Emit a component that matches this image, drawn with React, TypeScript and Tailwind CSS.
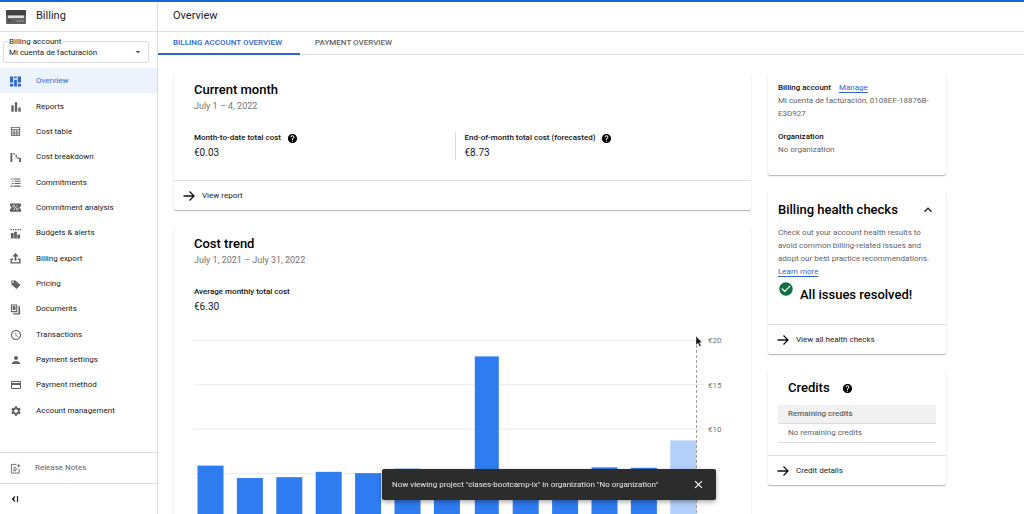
import { useState, type ReactNode } from "react";
import { MdBarChart, MdPerson, MdSettings, MdAccessTime, MdOutlineCreditCard, MdHelp, MdCheckCircle, MdClose, MdArrowDropDown, MdExpandLess } from "react-icons/md";

const font = "font-['Roboto','Liberation_Sans',sans-serif]";

function Glyph({ children }: { children: ReactNode }) {
  return (
    <svg viewBox="0 0 24 24" className="size-[11px] shrink-0" fill="currentColor">{children}</svg>
  );
}

const OverviewIcon = () => (
  <Glyph>
    <path d="M0 1h7v13H0zM0 17h7v6H0zM9 1h6v4H9zM9 8h6v15H9zM17 1h7v13h-7zM17 17h7v6h-7z" />
  </Glyph>
);

const CostTableIcon = () => (
  <Glyph>
    <path fillRule="evenodd" d="M2 2h20v20H2zM4 4v3h16V4zM4 9.500v3h4v-3zM10 9.500v3h4v-3zM16 9.500v3h4v-3zM4 14v2.500h4V14zM10 14v2.500h4V14zM16 14v2.500h4V14zM4 18v2h4v-2zM10 18v2h4v-2zM16 18v2h4v-2z" />
  </Glyph>
);

const BreakdownIcon = () => (
  <Glyph>
    <path d="M1 2h4v20H1zM7 2h3v4H7zM12 6h3v6h-3zM16 11h3v4h-3zM20 13h4v9h-4z" />
  </Glyph>
);

const CommitmentsIcon = () => (
  <Glyph>
    <path d="M8 3h15v2.500H8zM10 8h13v2.500H10zM10 13h13v2.500H10zM8 18.500h15V21H8zM1 3h5v2H1zM4 8h4v2H4zM4 13h4v2H4zM1 18.500h5V21H1z" />
  </Glyph>
);

const AnalysisIcon = () => (
  <Glyph>
    <path d="M0 3h24v6a3 3 0 0 0 0 6v6H0v-6a3 3 0 0 0 0-6z" />
    <path d="M16 6.500L8 17.500" stroke="#fff" strokeWidth="1.500" />
    <circle cx="8" cy="9" r="2" fill="none" stroke="#fff" strokeWidth="1.500" />
    <circle cx="16" cy="15" r="2" fill="none" stroke="#fff" strokeWidth="1.500" />
  </Glyph>
);

const BudgetsIcon = () => (
  <Glyph>
    <path d="M1 2h3v3H1zM6 2h3v3H6zM11 2h3v3h-3zM16 2h3v3h-3zM21 2h3v3h-3zM2 11h6v12H2zM9 8h6v15H9zM16 14h6v9h-6z" />
  </Glyph>
);

const ExportIcon = () => (
  <Glyph>
    <path d="M12 0l7 7.500h-5V17h-4V7.500H5zM1 12h6v3H4v5h16v-5h-3v-3h6v11H1z" />
  </Glyph>
);

const PricingIcon = () => (
  <Glyph>
    <path fillRule="evenodd" d="M3 3h9l11 10-9 9L3 12zM6.500 5a1.800 1.800 0 1 0 0 3.600 1.800 1.800 0 0 0 0-3.600z" />
  </Glyph>
);

const DocumentsIcon = () => (
  <Glyph>
    <path fillRule="evenodd" d="M2 1h14v17H2zM4.500 3.500v12h9v-12z" />
    <path d="M6 5h6v8H6zM18.500 5H22v18H7v-3h11.500z" />
  </Glyph>
);

const NotesIcon = () => (
  <Glyph>
    <path d="M14 3H3v19h17v-9" fill="none" stroke="currentColor" strokeWidth="2" />
    <path d="M7 8h6v2H7zM7 12h9v2H7zM7 16h6v2H7zM19 1l1.300 3.700L24 6l-3.700 1.300L19 11l-1.300-3.700L14 6l3.700-1.300z" />
  </Glyph>
);

const ArrowIcon = () => (
  <svg viewBox="0 0 12 12" className="size-3 shrink-0" fill="none" stroke="#111" strokeWidth="1.300">
    <path d="M0.500 6h10.500M6.500 1.500L11 6l-4.500 4.500" />
  </svg>
);

const navItems = [
  { label: "Overview", icon: <OverviewIcon /> },
  { label: "Reports", icon: <MdBarChart className="size-3.5 shrink-0" /> },
  { label: "Cost table", icon: <CostTableIcon /> },
  { label: "Cost breakdown", icon: <BreakdownIcon /> },
  { label: "Commitments", icon: <CommitmentsIcon /> },
  { label: "Commitment analysis", icon: <AnalysisIcon /> },
  { label: "Budgets & alerts", icon: <BudgetsIcon /> },
  { label: "Billing export", icon: <ExportIcon /> },
  { label: "Pricing", icon: <PricingIcon /> },
  { label: "Documents", icon: <DocumentsIcon /> },
  { label: "Transactions", icon: <MdAccessTime className="size-3 shrink-0" /> },
  { label: "Payment settings", icon: <MdPerson className="size-3 shrink-0" /> },
  { label: "Payment method", icon: <MdOutlineCreditCard className="size-3 shrink-0" /> },
  { label: "Account management", icon: <MdSettings className="size-3 shrink-0" /> },
];

// monthly cost in euro, the last one is the forecast
const costs = [5.9, 4.5, 4.6, 5.2, 5.05, 5.55, 5, 18.2, 5, 5, 5.7, 5.65, 8.73];
const ticks = [20, 15, 10, 5];
const baseY = 188;
const toY = (cost: number) => baseY - cost * 8.88;

function CostChart() {
  return (
    <svg viewBox="0 0 577 190" className="block w-full" role="img" aria-label="Cost trend">
      {ticks.map((t) => (
        <g key={t}>
          <line x1="19" x2="530" y1={toY(t)} y2={toY(t)} stroke="#e8eaed" />
          {/* the lowest tick label sits behind the snackbar */}
          {t > 5 && <text x="534" y={toY(t) + 3} fontSize="8" fill="#757575">€{t}</text>}
        </g>
      ))}
      {costs.map((c, i) => (
        <rect key={i} x={23.5 + i * 39.4 + (i === 7 ? 1.5 : 0)} y={toY(c)} width={i === 7 ? 24 : 26} height={baseY - toY(c)} fill={i === costs.length - 1 ? "#b3d0fa" : "#2f7bf0"} />
      ))}
      <line x1="522.5" x2="522.5" y1="10" y2={baseY} stroke="#9e9e9e" strokeDasharray="3 2" />
      <path d="M522 6v9l2-1.800 1.500 3.300 1.500-.7-1.500-3.200h2.500z" fill="#111" stroke="#fff" strokeWidth="0.400" />
    </svg>
  );
}

function Card({ children }: { children: ReactNode }) {
  return <section className="bg-white rounded-[2px] shadow-[0_1px_1px_0_rgba(60,64,67,0.3),0_1px_2px_0_rgba(60,64,67,0.12)]">{children}</section>;
}

function CardLink({ label }: { label: string }) {
  return (
    <a href="#" className="flex h-[30px] items-center gap-[7px] border-t border-[#e0e0e0] pl-[9px] text-[8px] text-[#202124]">
      <ArrowIcon />
      {label}
    </a>
  );
}

function Help() {
  return (
    <button aria-label="Help" className="flex cursor-pointer text-black">
      <MdHelp className="size-[11px]" />
    </button>
  );
}

function Sidebar() {
  const [active, setActive] = useState("Overview");

  return (
    <aside className="flex w-[158px] shrink-0 flex-col border-r border-[#dadce0]">
      <div className="flex h-[30px] shrink-0 items-center gap-[10px] border-b border-[#e0e0e0] px-1.5">
        <svg viewBox="0 0 20 14" className="h-[14px] w-5">
          <rect width="20" height="14" rx="1" fill="#616161" />
          <rect width="20" height="5" rx="1" fill="#424242" />
          <rect x="2" y="5.500" width="16" height="2.500" fill="#e0e0e0" />
          <path d="M11 11h1.500M13.500 11H15M16 11h1.500" stroke="#bdbdbd" />
          <rect x="2" y="10" width="3" height="1.500" fill="#424242" />
        </svg>
        <span className="text-[11px] text-[#202124]">Billing</span>
      </div>

      <div className="relative mt-[9px] ml-[3px] mr-2 h-[22px] shrink-0 rounded-[3px] border border-[#dadce0]">
        <label htmlFor="account" className="absolute -top-1 left-1 bg-white px-px text-[8px] leading-[8px] text-[#202124]">Billing account</label>
        <select id="account" className="block h-full w-full appearance-none bg-transparent pt-[2px] pl-[5px] text-[8px] text-[#202124]">
          <option>Mi cuenta de facturación</option>
        </select>
        <MdArrowDropDown className="pointer-events-none absolute right-1 top-1 size-3 text-[#5f6368]" />
      </div>

      <nav className="mt-[5px] grid h-[355px] shrink-0 auto-rows-fr">
        {navItems.map((item) => (
          <a key={item.label} href="#" onClick={() => setActive(item.label)}
            className={`flex items-center gap-[9px] pt-px pl-[9px] text-[8px] ${
              active === item.label ? "bg-[#edf3fe] text-[#2f67d2]" : "text-[#202124]"
            }`}>
            <span className={`flex w-[18px] pl-px ${active === item.label ? "text-[#2f67d2]" : "text-[#616161]"}`}>
              <span className="flex w-[11px] justify-center">{item.icon}</span>
            </span>
            {item.label}
          </a>
        ))}
      </nav>

      <div className="mt-auto shrink-0 text-[8px] text-[#5f6368]">
        <a href="#" className="flex h-[31px] items-center gap-[14px] border-t border-[#dadce0] pl-[10px]">
          <NotesIcon />
          Release Notes
        </a>
        <button aria-label="Collapse menu" className="flex h-[31px] w-full cursor-pointer items-center border-t border-[#dadce0] pl-[11px] text-[#202124]">
          <svg viewBox="0 0 8 8" className="size-2" fill="none" stroke="currentColor" strokeWidth="1.200">
            <path d="M4 1.500L1.500 4 4 6.500M1.500 4h2M6.500 1v6" />
          </svg>
        </button>
      </div>
    </aside>
  );
}

function Stat({ label, value, help }: { label: string; value: string; help?: boolean }) {
  return (
    <div>
      <div className="flex h-3 items-center gap-[6px] text-[8px] font-medium text-[#111]">
        {label}
        {help && <Help />}
      </div>
      <p className="mt-0.5 text-[10px] leading-[14px] text-[#202124]">{value}</p>
    </div>
  );
}

function Toast({ onClose }: { onClose: () => void }) {
  return (
    <div role="status" className="fixed left-[382px] top-[469px] flex h-[31px] w-[334px] items-center justify-between rounded-[2px] bg-[#2c2c2c] pl-[10px] pr-[11px] text-[8px] text-[#e8eaed] shadow-[0_2px_5px_rgba(0,0,0,0.35)]">
      Now viewing project "clases-bootcamp-ix" in organization "No organization"
      <button aria-label="Close" onClick={onClose} className="cursor-pointer text-white">
        <MdClose className="size-[13px]" />
      </button>
    </div>
  );
}

export default function App() {
  const [toastOpen, setToastOpen] = useState(true);
  const [healthOpen, setHealthOpen] = useState(true);

  return (
    <div className={`${font} flex h-screen flex-col overflow-hidden bg-white text-[#202124]`}>
      <div className="h-[2px] shrink-0 bg-[#1565d8]" />
      <div className="flex min-h-0 flex-1">
        <Sidebar />

        <main className="flex min-w-0 flex-1 flex-col">
          <h1 className="flex h-[30px] shrink-0 items-center border-b border-[#e0e0e0] pl-[15px] text-[11px]">Overview</h1>
          <div className="flex h-[23px] shrink-0 border-b border-[#e0e0e0] text-[8px] font-medium">
            <button className="-mb-px cursor-pointer border-b-2 border-[#2f67d2] pt-px pr-[18px] pl-[15px] text-[#2f67d2]">BILLING ACCOUNT OVERVIEW</button>
            <button className="cursor-pointer pr-[18px] pl-[15px] text-[#5f6368]">PAYMENT OVERVIEW</button>
          </div>

          <div className="flex min-h-0 flex-1 items-start gap-[17px] overflow-y-auto pt-[18px] pr-[78px] pl-4 [scrollbar-width:none]">
            <div className="flex min-w-0 flex-1 flex-col gap-4">
              <Card>
                <div className="h-[107px] px-5 pt-2">
                  <h2 className="text-[13px] leading-[18px] font-medium text-black">Current month</h2>
                  <p className="mt-px text-[9px] leading-[12px] text-[#757575]">July 1 – 4, 2022</p>
                  <div className="mt-5 grid grid-cols-2">
                    <Stat label="Month-to-date total cost" value="€0.03" help />
                    <div className="-ml-2 border-l border-[#dadce0] pl-[9px]">
                      <Stat label="End-of-month total cost (forecasted)" value="€8.73" help />
                    </div>
                  </div>
                </div>
                <CardLink label="View report" />
              </Card>

              <Card>
                <div className="px-5 pt-[9px]">
                  <h2 className="text-[13px] leading-[18px] font-medium text-black">Cost trend</h2>
                  <p className="mt-px text-[9px] leading-[12px] text-[#757575]">July 1, 2021 – July 31, 2022</p>
                  <div className="mt-5">
                    <Stat label="Average monthly total cost" value="€6.30" />
                  </div>
                </div>
                <div className="pt-4">
                  <CostChart />
                </div>
              </Card>
            </div>

            <div className="flex w-[178px] shrink-0 flex-col gap-4">
              <Card>
                <div className="h-[102px] px-[10px] pt-2 text-[8px] leading-[13px] text-[#5f6368]">
                  <h3 className="flex gap-2 font-medium text-[#111]">
                    Billing account
                    <a href="#" className="font-normal text-[#2f67d2] underline underline-offset-2">Manage</a>
                  </h3>
                  <p>Mi cuenta de facturación, 0108EF-18876B-E3D927</p>
                  <h3 className="mt-[10px] font-medium text-[#111]">Organization</h3>
                  <p>No organization</p>
                </div>
              </Card>

              <Card>
                <div className="px-[10px] pt-[10px]">
                  <div className="flex items-center justify-between">
                    <h2 className="text-[13px] leading-[18px] font-medium text-black">Billing health checks</h2>
                    <button aria-label="Toggle health checks" onClick={() => setHealthOpen(!healthOpen)} className="cursor-pointer">
                      <MdExpandLess className="size-4" />
                    </button>
                  </div>
                  {healthOpen && (
                    <div className="h-[105px]">
                      <p className="pt-[7px] text-[8px] leading-[13px] text-[#5f6368]">
                        Check out your account health results to avoid common billing-related issues and adopt our best practice recommendations.{" "}
                        <a href="#" className="text-[#2f67d2] underline underline-offset-2">Learn more</a>
                      </p>
                      <div className="mt-[3px] flex gap-[6px]">
                        <MdCheckCircle className="size-4 text-[#137044]" />
                        <p className="pt-[5px] text-[13px] leading-[18px] font-medium text-black">All issues resolved!</p>
                      </div>
                    </div>
                  )}
                </div>
                <CardLink label="View all health checks" />
              </Card>

              <Card>
                <div className="h-[85px] px-[10px] pt-[9px]">
                  <div className="flex items-center gap-3 pl-[10px]">
                    <h2 className="text-[13px] leading-[18px] font-medium text-black">Credits</h2>
                    <Help />
                  </div>
                  <table className="mt-2 w-full text-left text-[8px] leading-[18px] text-[#5f6368]">
                    <thead>
                      <tr className="border-b border-[#dadce0] bg-[#f1f1f1]">
                        <th className="py-0 pl-[10px] font-medium">Remaining credits</th>
                      </tr>
                    </thead>
                    <tbody>
                      <tr className="border-b border-[#dadce0]">
                        <td className="py-0 pl-[10px]">No remaining credits</td>
                      </tr>
                    </tbody>
                  </table>
                </div>
                <CardLink label="Credit details" />
              </Card>
            </div>
          </div>
        </main>
      </div>

      {toastOpen && <Toast onClose={() => setToastOpen(false)} />}
    </div>
  );
}
